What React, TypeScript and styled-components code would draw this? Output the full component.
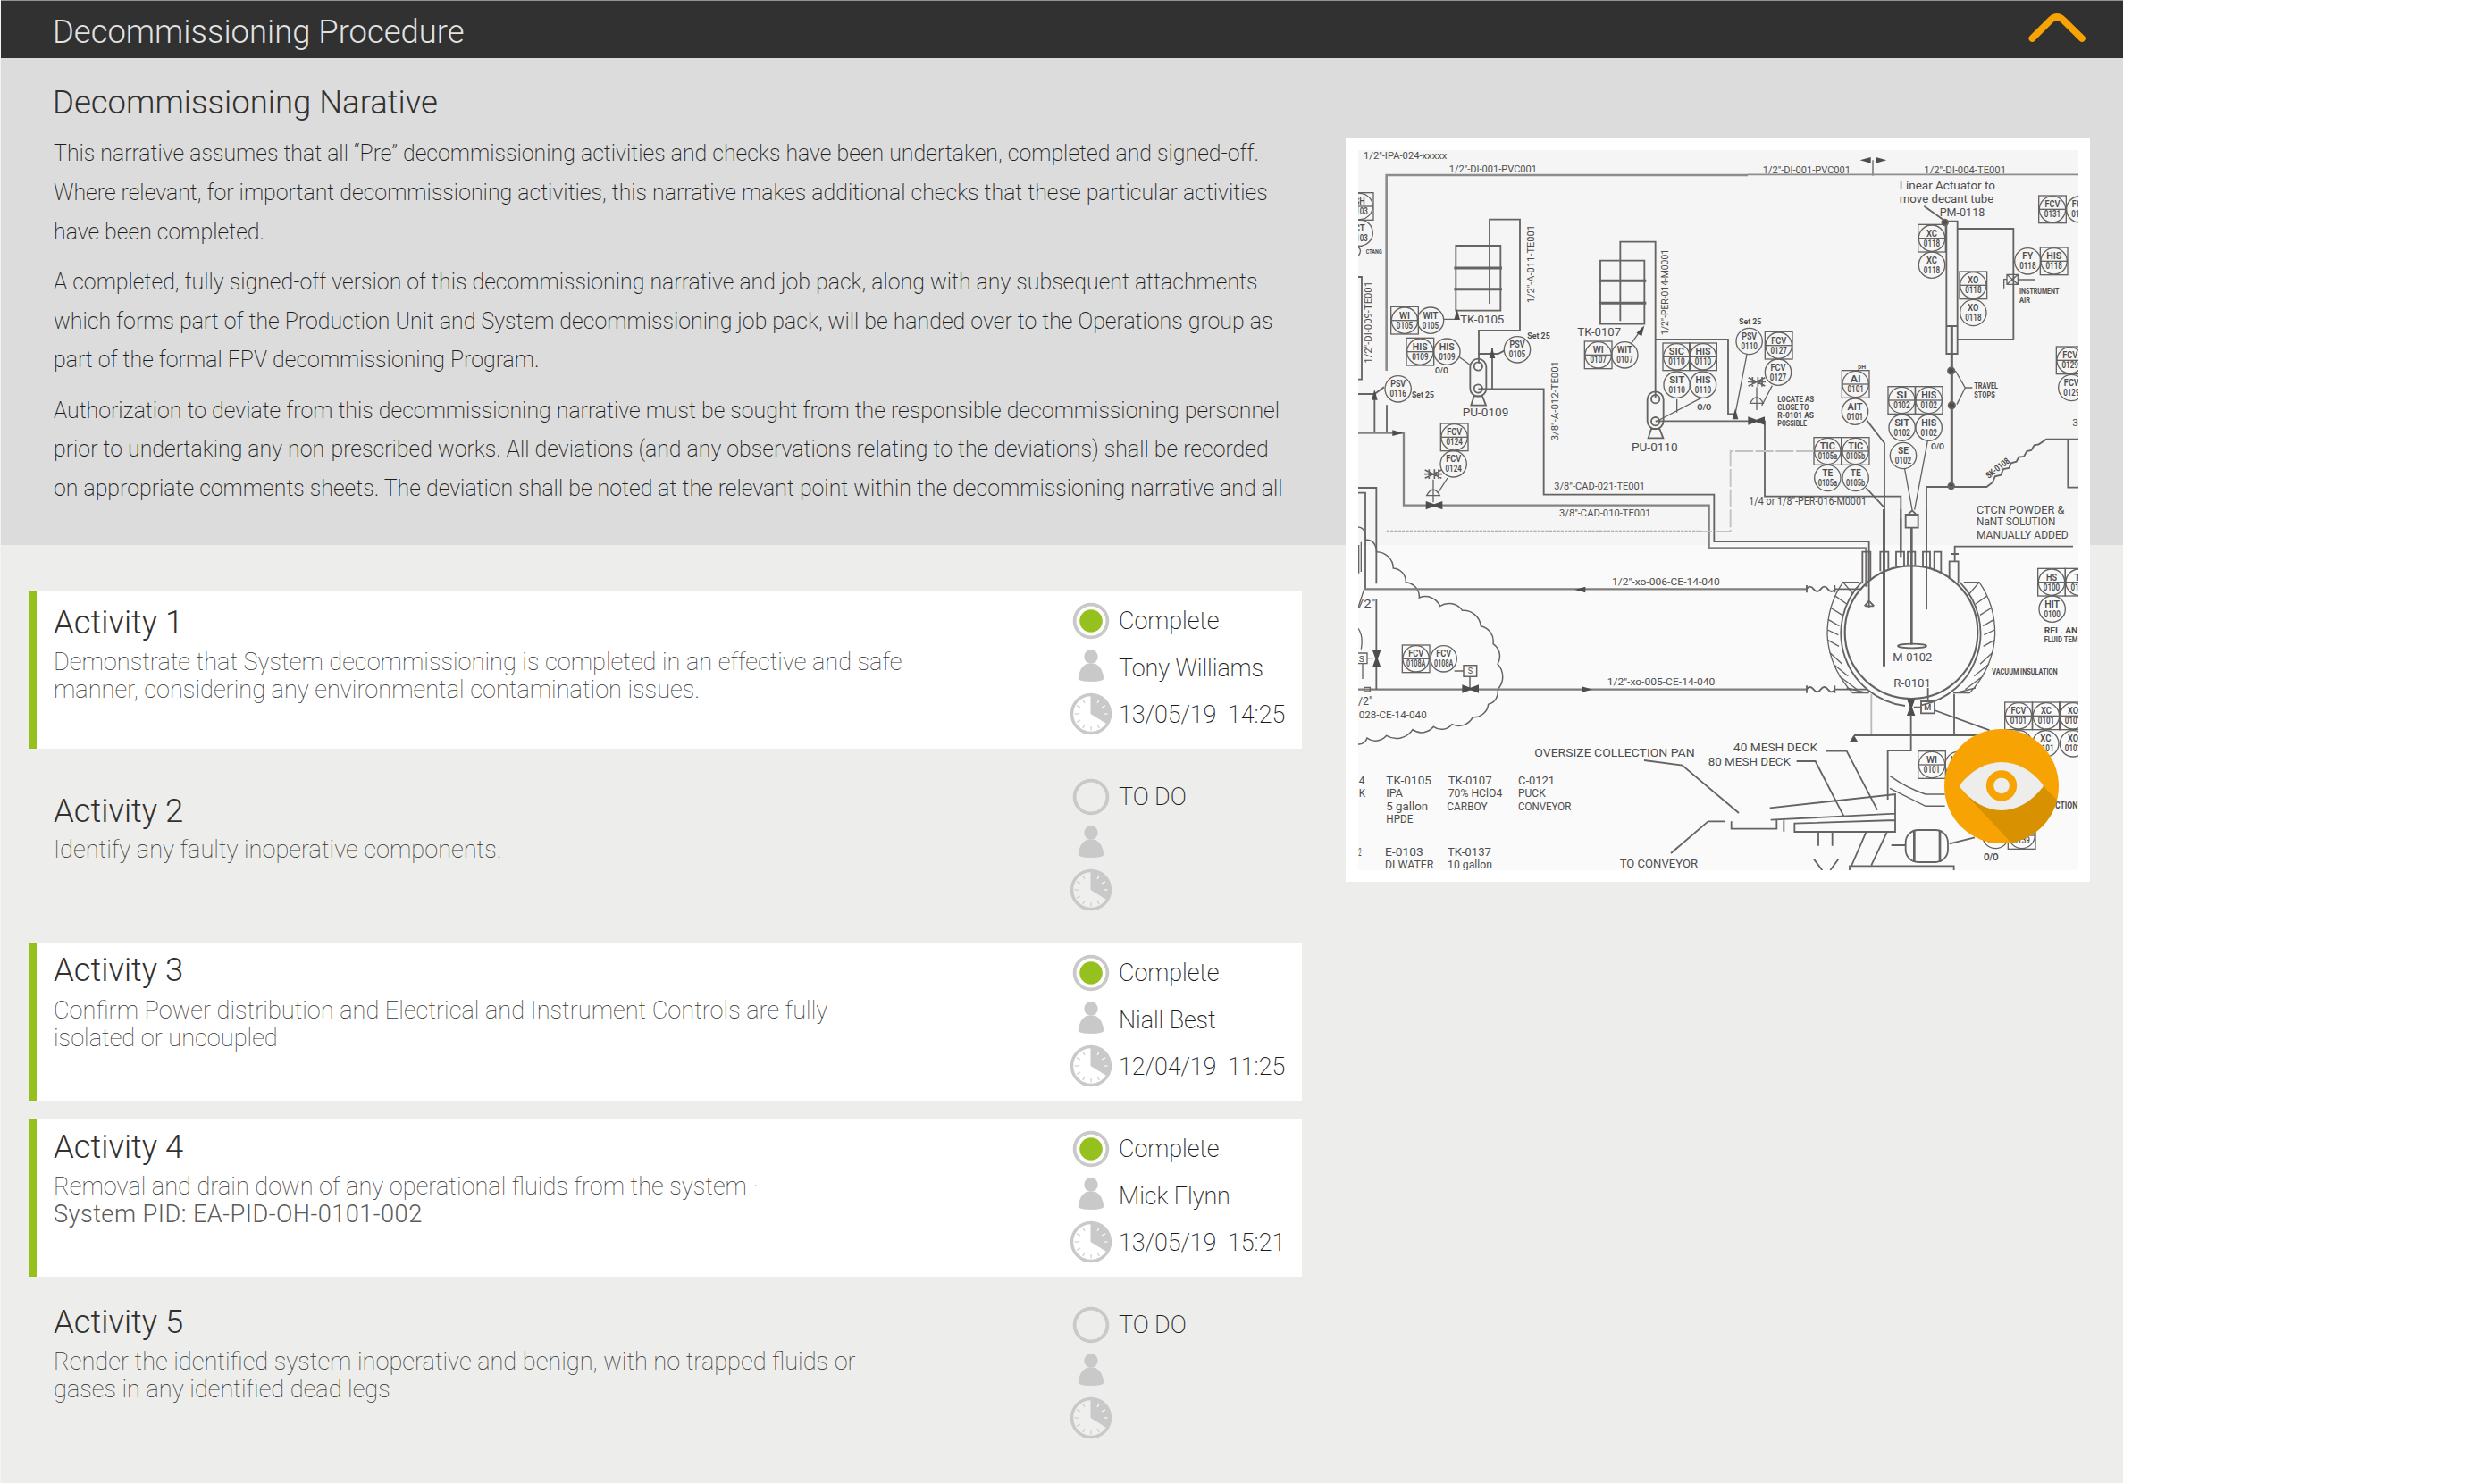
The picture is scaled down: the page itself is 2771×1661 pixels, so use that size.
import React from "react";
import styled, { createGlobalStyle } from "styled-components";

const Global = createGlobalStyle`
  * { box-sizing: border-box; }
  body { margin: 0; background: #fff; }
  #root { font-family: Roboto, "Liberation Sans", sans-serif; color: #313131; }
`;

const Panel = styled.main`
  width: 2376px;
  height: 1660px;
  border-left: 1px solid #f3f3f3;
  background: #ededeb;
  display: flex;
  flex-direction: column;
`;

const Header = styled.header`
  height: 65px;
  flex: none;
  display: flex;
  align-items: center;
  justify-content: space-between;
  padding: 5px 41px 0 58px;
  border-top: 1px solid #949494;
  background: #313131;
`;

const Title = styled.h1`
  margin: 0;
  font-size: 36.4px;
  font-weight: 300;
  line-height: 44px;
  white-space: nowrap;
  color: #e2e2e1;
`;

const Toggle = styled.button`
  border: 0;
  padding: 0;
  margin-top: -9px;
  background: none;
  display: flex;
`;

const Body = styled.div`
  flex: 1;
  display: grid;
  grid-template-columns: 1505px 833px 1fr;
  grid-template-rows: 545px 1fr;
`;

const Narrative = styled.section`
  grid-area: 1 / 1 / 2 / 4;
  background: #dcdcdc;
  padding: 28px 0 0 58px;
  overflow: hidden;
`;

const SubTitle = styled.h2`
  margin: 0 0 13px;
  font-size: 36.5px;
  font-weight: 300;
  line-height: 44px;
`;

const Paragraph = styled.p`
  margin: 0 0 12.5px;
  padding-left: 1px;
  font-size: 24.9px;
  font-weight: 200;
  line-height: 43.75px;
  white-space: nowrap;
  color: #1d1d1d;
`;

const Activities = styled.section`
  grid-area: 2 / 1 / 3 / 2;
  padding: 52px 0 0 31px;
  display: flex;
  flex-direction: column;
  gap: 21px;
`;

const Card = styled.article<{ $done: boolean }>`
  width: 1425px;
  height: 176px;
  flex: none;
  display: grid;
  grid-template-columns: 1138px 1fr;
  padding-left: 19px;
  border-left: 9px solid ${(p) => (p.$done ? "#95c11f" : "transparent")};
  background: ${(p) => (p.$done ? "#fff" : "transparent")};
`;

const Summary = styled.div<{ $top: number }>`
  padding-top: ${(p) => p.$top - 33.5}px;
`;

const CardTitle = styled.h3<{ $gap: number }>`
  margin: 0 0 ${(p) => p.$gap}px;
  font-size: 36.4px;
  font-weight: 300;
  line-height: 44px;
`;

const Description = styled.p`
  margin: 0;
  font-size: 27.2px;
  font-weight: 100;
  line-height: 31px;
  white-space: nowrap;
`;

const Reference = styled.span`
  font-weight: 300;
  letter-spacing: 0.45px;
  color: #5c5a5a;
`;

const Facts = styled.ul`
  list-style: none;
  margin: 0;
  padding: 7px 0 0;
`;

const Fact = styled.li<{ $h: number }>`
  height: ${(p) => p.$h}px;
  display: grid;
  grid-template-columns: 46px 1fr;
  column-gap: 8px;
  align-items: center;
  justify-items: center;
`;

const FactText = styled.span<{ $shift: number }>`
  justify-self: start;
  margin-top: ${(p) => p.$shift}px;
  font-size: 27px;
  font-weight: 200;
  letter-spacing: -0.1px;
  line-height: 32px;
  white-space: pre;
  color: #1d1d1d;
`;

const Figure = styled.figure`
  grid-area: 1 / 2 / 3 / 3;
  position: relative;
  width: 833px;
  height: 833px;
  margin: 89px 0 0;
  padding: 14px 13px 13px 14px;
  background: #fff;
`;

const Drawing = styled.svg`
  display: block;
  width: 806px;
  height: 806px;
  background: linear-gradient(#f5f5f5 442px, #fafafa 442px);
  font-family: Roboto, "Liberation Sans", sans-serif;
  fill: none;
  stroke: #666463;
  stroke-width: 5.5;
`;

const Reveal = styled.button`
  position: absolute;
  left: 670px;
  top: 662px;
  border: 0;
  padding: 0;
  background: none;
  display: flex;
`;

/* ---------- small icons ---------- */

const GREY = "#cac9ca";

const StatusIcon = ({ done }: { done: boolean }) => (
  <svg width="42" height="42" viewBox="-21 -21 42 42">
    <circle r="18.4" fill={done ? "#fff" : "none"} stroke={GREY} strokeWidth="3.8" />
    {done && <circle r="12.8" fill="#95c11f" />}
  </svg>
);

const PersonIcon = () => (
  <svg width="30" height="38" viewBox="0 0 30 38" fill={GREY}>
    <circle cx="15" cy="9" r="7.7" />
    <path d="M9.5 17.2 Q15 16 20.5 17.2 Q28.500 21.500 29.200 33.500 Q29 36.800 15 37 Q1 36.800 .8 33.500 Q1.500 21.500 9.500 17.200Z" />
  </svg>
);

const ClockIcon = ({ done }: { done: boolean }) => (
  <svg width="48" height="48" viewBox="-24 -24 48 48">
    <circle r="21.500" fill={done ? "#fff" : "#efefee"} stroke={GREY} strokeWidth="3.400" />
    <path d="M-.5 0 V-22 A22 22 0 0 1 18.500 11.800Z" fill={GREY} />
    {Array.from({ length: 11 }, (_, i) => i + 1).map((h) => (
      <path
        key={h}
        d="M0 -18.500 V-14"
        transform={`rotate(${h * 30})`}
        stroke={h < 4 ? "#fff" : GREY}
        strokeWidth="1.100"
      />
    ))}
  </svg>
);

const EyeIcon = () => (
  <svg width="128" height="128" viewBox="-192 -192 384 384">
    <defs>
      <clipPath id="disc">
        <circle r="192" />
      </clipPath>
    </defs>
    <circle r="192" fill="#f7a304" />
    <path clipPath="url(#disc)" d="M140 0 L240 100 V240 H80 L-110 38Z" fill="#d89100" />
    <path d="M-139 4 Q-142 -2 -138 -7 Q-78 -80 0 -81 Q78 -80 138 -7 Q142 -2 138 4 Q78 80 0 81 Q-78 80 -139 4Z" fill="#ededeb" />
    <circle r="39" cy="-2" fill="none" stroke="#f7a304" strokeWidth="25" />
  </svg>
);

/* ---------- piping diagram ---------- */

const INK = "#4f4d4c";

type LabelProps = { x: number; y: number; w: number; s?: number; b?: number; r?: number; t: string };
const Label = ({ x, y, w, s = 36, b = 400, r = 0, t }: LabelProps) => (
  <text
    transform={`translate(${x} ${y}) rotate(${r})`}
    fontSize={s}
    fontWeight={b}
    textLength={w}
    lengthAdjust="spacingAndGlyphs"
    fill={INK}
    stroke="none"
  >
    {t}
  </text>
);

type TagProps = { x: number; y: number; a: string; n: string; box?: boolean };
const Tag = ({ x, y, a, n, box }: TagProps) => (
  <g transform={`translate(${x} ${y})`} strokeWidth="4">
    {box && <rect x="-46" y="-46" width="92" height="92" />}
    {box && <path d="M-45 0H45" />}
    <circle r="44" />
    <g fill={INK} stroke="none" fontSize="31" fontWeight="600" textAnchor="middle">
      <text y="-6" textLength={a.length * 15 + 6} lengthAdjust="spacingAndGlyphs">{a}</text>
      <text y="27" textLength={n.length > 4 ? 64 : 55} lengthAdjust="spacingAndGlyphs">{n}</text>
    </g>
  </g>
);

const Valve = ({ x, y, r = 0 }: { x: number; y: number; r?: number }) => (
  <path transform={`translate(${x} ${y}) rotate(${r})`} d="M-28 -14 L0 -4 L28 -14 V14 L0 4 L-28 14Z" fill={INK} stroke="none" />
);

const Arrow = ({ x, y, r = 0 }: { x: number; y: number; r?: number }) => (
  <path transform={`translate(${x} ${y}) rotate(${r})`} d="M-18 -10 L18 0 L-18 10Z" fill={INK} stroke="none" />
);

const Actuated = ({ x, y }: { x: number; y: number }) => (
  <g transform={`translate(${x} ${y})`} strokeWidth="4">
    <path d="M-28 -14L28 14M-28 14L28 -14M-14 -16V16M4 -16V16M18 -16V16M-30 0H30" strokeWidth="5" />
    <path d="M0 18V95M-22 72Q0 32 22 72Z" />
  </g>
);

const Pump = ({ x, y }: { x: number; y: number }) => (
  <g transform={`translate(${x} ${y})`}>
    <rect x="-27" y="-25" width="54" height="126" rx="27" />
    <circle r="14" />
    <circle cy="75" r="14" />
    <path d="M-14 100L-24 131H26L14 100Z" />
  </g>
);

const cloud: [number, number][] = [
  [122, 143], [178, 198], [220, 245], [265, 297], [335, 325], [410, 340], [472, 392], [513, 452],
  [528, 520], [528, 605], [497, 655], [445, 698], [375, 722], [313, 730], [243, 740], [155, 760], [90, 768], [56, 788],
];
const cloudPath =
  "M60 60 Q85 60 85 103 Q118 100 122 143" +
  cloud
    .slice(1)
    .map(([x, y], i) => {
      const d = Math.hypot(x - cloud[i][0], y - cloud[i][1]) * 0.72;
      return ` A${d} ${d} 0 0 1 ${x} ${y}`;
    })
    .join("");

const NorthWest = () => (
  <g>
    <Label x={78} y={83} w={280} s={30} t={'1/2"-IPA-024-xxxxx'} />
    <Label x={365} y={130} w={295} s={34} t={'1/2"-DI-001-PVC001'} />
    <path d="M155 795V138H1368" stroke="#8f8d8c" strokeWidth="8" />
    <path d="M388 375H538V593H388Z" />
    <path d="M382 450H543M382 521H543" strokeWidth="9" />
    <path d="M501 570V287H603V660H465V770" />
    <path d="M873 425H1021V638H873Z" />
    <path d="M868 493H1027M868 568H1027" strokeWidth="9" />
    <path d="M940 628V362H1058V885M1058 690H1302V940H1330" />
    <Label x={402} y={636} w={148} t="TK-0105" />
    <Label x={796} y={678} w={146} t="TK-0107" />
    <Label x={652} y={568} w={262} s={34} r={-90} t={'1/2"-A-011-TE001'} />
    <Label x={1100} y={675} w={288} s={34} r={-90} t={'1/2"-PER-014-M0001'} />
    <Label x={106} y={770} w={275} s={34} r={-90} t={'1/2"-DI-009-TE001'} />
    <Label x={733} y={1030} w={268} s={34} r={-90} t={'3/8"-A-012-TE001'} />
    <Tag x={65} y={243} a="SH" n="0103" box />
    <Tag x={65} y={332} a="CT" n="0103" />
    <path d="M60 380Q75 390 60 410" strokeWidth="4" />
    <Label x={86} y={402} w={54} s={24} b={700} t="CTANG" />
    <Tag x={216} y={626} a="WI" n="0105" box />
    <Tag x={303} y={626} a="WIT" n="0105" />
    <Tag x={268} y={731} a="HIS" n="0109" box />
    <Tag x={358} y={731} a="HIS" n="0109" />
    <Tag x={594} y={724} a="PSV" n="0105" />
    <Tag x={194} y={856} a="PSV" n="0116" />
    <Tag x={383} y={1018} a="FCV" n="0124" box />
    <Tag x={380} y={1108} a="FCV" n="0124" />
    <Tag x={866} y={742} a="WI" n="0107" box />
    <Tag x={955} y={742} a="WIT" n="0107" />
    <Tag x={1129} y={748} a="SIC" n="0110" box />
    <Tag x={1218} y={748} a="HIS" n="0110" box />
    <Tag x={1130} y={842} a="SIT" n="0110" />
    <Tag x={1218} y={842} a="HIS" n="0110" />
    <Label x={628} y={688} w={76} s={27} b={700} t="Set 25" />
    <Label x={240} y={885} w={75} s={27} b={700} t="Set 25" />
    <Label x={318} y={804} w={44} s={28} b={700} t="O/O" />
    <Label x={1198} y={928} w={48} s={28} b={700} t="O/O" />
    <Pump x={463} y={780} />
    <Label x={410} y={948} w={155} t="PU-0109" />
    <Pump x={1058} y={890} />
    <Label x={978} y={1066} w={155} t="PU-0110" />
    <path d="M463 738H530L550 728M510 720V855M463 856H683V1211H1255V1368H1775V1590" />
    <path d="M1058 964H1425V1217H1882V1420" />
    <path d="M398 748L435 775M348 622H392V600M975 706L1015 650M1130 890V935M1060 966L1212 886" strokeWidth="4" />
    <Arrow x={510} y={735} r={-90} />
    <Arrow x={392} y={606} r={-90} />
    <Arrow x={1012} y={658} r={-60} />
    <path d="M60 873H115L147 850M115 870V1003M156 910V1003M60 480H72V824H60M60 1188H121V1510M60 1205H84V1528" />
    <path d="M60 1004H213V1247H1238V1390H1765V1520" strokeWidth="7" stroke="#858382" />
    <Arrow x={193} y={1004} />
    <Arrow x={115} y={875} r={-90} />
    <Actuated x={312} y={1142} />
    <path d="M360 1155L328 1205" strokeWidth="4" />
    <Valve x={315} y={1247} />
    <Label x={718} y={1194} w={305} s={34} t={'3/8"-CAD-021-TE001'} />
  </g>
);

const NorthEast = () => (
  <g transform="translate(1260 0)">
    <Label x={158} y={131} w={295} s={34} t={'1/2"-DI-001-PVC001'} />
    <Label x={700} y={131} w={275} s={34} t={'1/2"-DI-004-TE001'} />
    <path d="M108 136H1220M528 88V140" stroke="#8f8d8c" />
    <Arrow x={503} y={88} r={180} />
    <Arrow x={556} y={88} />
    <Label x={617} y={187} w={322} s={38} t="Linear Actuator to" />
    <Label x={617} y={231} w={317} s={38} t="move decant tube" />
    <Label x={752} y={276} w={152} t="PM-0118" />
    <path d="M700 242L770 292M775 293H812V738H775ZM775 645H812M812 318H1000V690H812" />
    <path d="M793 645V1182" strokeWidth="9" />
    <g fill={INK}>
      <circle cx="770" cy="297" r="10" />
      <circle cx="791" cy="795" r="11" />
      <circle cx="793" cy="911" r="11" />
      <circle cx="791" cy="1182" r="10" />
    </g>
    <path d="M978 472H1015V505H978ZM978 472L1015 505M978 505L1015 472M1015 489H1072M978 488H968V518" strokeWidth="4" />
    <Label x={1020} y={538} w={133} s={28} b={700} t="INSTRUMENT" />
    <Label x={1020} y={566} w={36} s={26} b={700} t="AIR" />
    <Tag x={726} y={350} a="XC" n="0118" box />
    <Tag x={726} y={440} a="XC" n="0118" />
    <Tag x={865} y={508} a="XO" n="0118" box />
    <Tag x={865} y={600} a="XO" n="0118" />
    <Tag x={1048} y={427} a="FY" n="0118" />
    <Tag x={1136} y={427} a="HIS" n="0118" box />
    <Tag x={1131} y={253} a="FCV" n="0131" box />
    <Tag x={1222} y={253} a="FCV" n="0131" />
    <Tag x={113} y={696} a="PSV" n="0110" />
    <Tag x={212} y={710} a="FCV" n="0127" box />
    <Tag x={210} y={800} a="FCV" n="0127" />
    <Tag x={470} y={840} a="AI" n="0101" box />
    <Tag x={468} y={932} a="AIT" n="0101" />
    <Tag x={625} y={894} a="SI" n="0102" box />
    <Tag x={716} y={894} a="HIS" n="0102" box />
    <Tag x={626} y={986} a="SIT" n="0102" />
    <Tag x={716} y={986} a="HIS" n="0102" />
    <Tag x={630} y={1080} a="SE" n="0102" />
    <Tag x={376} y={1065} a="TIC" n="0105a" box />
    <Tag x={470} y={1065} a="TIC" n="0105b" box />
    <Tag x={376} y={1155} a="TE" n="0105a" />
    <Tag x={470} y={1155} a="TE" n="0105b" />
    <Tag x={1190} y={760} a="FCV" n="0129" box />
    <Tag x={1195} y={852} a="FCV" n="0129" />
    <Label x={1198} y={980} w={20} s={35} t="3" />
    <Label x={78} y={640} w={76} s={27} b={700} t="Set 25" />
    <Label x={208} y={899} w={122} s={28} b={700} t="LOCATE AS" />
    <Label x={208} y={926} w={105} s={28} b={700} t="CLOSE TO" />
    <Label x={208} y={953} w={122} s={28} b={700} t="R-0101 AS" />
    <Label x={208} y={980} w={98} s={28} b={700} t="POSSIBLE" />
    <Label x={112} y={1246} w={395} s={36} t={'1/4 or 1/8"-PER-016-M0001'} />
    <Label x={868} y={856} w={80} s={28} b={700} t="TRAVEL" />
    <Label x={868} y={884} w={70} s={28} b={700} t="STOPS" />
    <Label x={723} y={1060} w={45} s={28} b={700} t="O/O" />
    <Label x={478} y={790} w={26} s={22} b={700} t="pH" />
    <path d="M805 795L838 852H862M810 908L838 852M105 740L67 935M190 845L155 912M635 1125L660 1262M712 1030L668 1262" strokeWidth="4" />
    <path d="M508 962L567 1038V1787M505 1188L567 1255M622 1290V1400" />
    <Actuated x={138} y={832} />
    <Valve x={137} y={963} />
    <Arrow x={66} y={940} r={-90} />
    <path d="M708 1595V1185H910L930 1170L938 1150L958 1145L966 1125L985 1122L992 1105L1010 1100L1018 1085L1035 1083L1045 1065L1060 1062L1070 1045L1085 1042L1110 1025H1220M1183 1025V1187H1220" />
    <Label x={917} y={1158} w={92} s={30} b={700} r={-38} t="SK-0108" />
    <path d="M330 1065H50V1335H-50" stroke="#c4c2c1" strokeDasharray="60 8" />
  </g>
);

const SouthWest = () => (
  <g transform="translate(0 1260)">
    <Label x={735} y={24} w={308} s={34} t={'3/8"-CAD-010-TE001'} />
    <path d="M155 74H1212" stroke="#b1afae" strokeDasharray="10 3" />
    <path d={cloudPath} strokeWidth="4.5" />
    <path d="M62 120V215M70 110V210M60 400Q78 425 70 470M60 330L80 268" strokeWidth="4" />
    <path d="M80 268H1565M60 605H1565" strokeWidth="7" stroke="#807e7d" />
    <path d="M1565 268q12 -16 24 0t24 0t24 0t24 0H1750M1565 605q12 -16 24 0t24 0t24 0t24 0H1770" />
    <path d="M1566 255V280M1660 255V280M1566 592V617M1660 592V617" />
    <Arrow x={805} y={270} r={180} />
    <Arrow x={828} y={605} />
    <Label x={912} y={254} w={362} s={34} t={'1/2"-xo-006-CE-14-040'} />
    <Label x={896} y={590} w={362} s={34} t={'1/2"-xo-005-CE-14-040'} />
    <path d="M121 300V605" />
    <Valve x={122} y={502} r={90} />
    <path d="M60 483H90V518H60M90 500H112M75 520V570M80 598H100V612H80Z" strokeWidth="4" />
    <Label x={62} y={512} w={18} s={28} t="S" />
    <Label x={60} y={330} w={58} s={36} t={'/2"'} />
    <Label x={60} y={658} w={48} s={36} t={'/2"'} />
    <Label x={62} y={702} w={228} s={34} t="028-CE-14-040" />
    <Tag x={254} y={502} a="FCV" n="0108A" box />
    <Tag x={347} y={502} a="FCV" n="0108A" />
    <path d="M383 543H414M414 524H458V562H414ZM435 562V600" strokeWidth="4.5" />
    <Label x={428} y={553} w={16} s={28} t="S" />
    <Valve x={437} y={603} />
    <Label x={652} y={830} w={538} s={40} t="OVERSIZE COLLECTION PAN" />
    <path d="M1020 843L1148 860L1338 1020M1110 1155L1235 1048H1292" />
    <Label x={62} y={923} w={20} s={40} t="4" />
    <Label x={62} y={967} w={22} s={40} t="K" />
    <Label x={61} y={1163} w={10} s={40} t="2" />
    <Label x={154} y={923} w={152} s={40} t="TK-0105" />
    <Label x={154} y={967} w={56} s={40} t="IPA" />
    <Label x={154} y={1010} w={140} s={40} t="5 gallon" />
    <Label x={154} y={1054} w={90} s={40} t="HPDE" />
    <Label x={362} y={923} w={147} s={40} t="TK-0107" />
    <Label x={362} y={967} w={182} s={40} t="70% HClO4" />
    <Label x={358} y={1010} w={136} s={40} t="CARBOY" />
    <Label x={597} y={923} w={123} s={40} t="C-0121" />
    <Label x={597} y={967} w={92} s={40} t="PUCK" />
    <Label x={597} y={1010} w={178} s={40} t="CONVEYOR" />
    <Label x={150} y={1163} w={128} s={40} t="E-0103" />
    <Label x={150} y={1206} w={163} s={40} t="DI WATER" />
    <Label x={360} y={1163} w={147} s={40} t="TK-0137" />
    <Label x={360} y={1206} w={150} s={40} t="10 gallon" />
    <Label x={938} y={1203} w={262} s={40} t="TO CONVEYOR" />
    <Label x={1235} y={861} w={277} s={40} t="80 MESH DECK" />
  </g>
);

const jacket =
  "M480 245H428Q375 320 375 420Q380 530 460 617H515M428 245L462 285M400 290L440 318M385 330L425 355M378 370L415 392M376 405L412 422M378 440L414 460M382 480L425 520M395 520L445 560M415 560L475 605M440 600L500 615";

const SouthEast = () => (
  <g transform="translate(1260 1260)">
    <Label x={876} y={16} w={295} s={40} t="CTCN POWDER &amp;" />
    <Label x={876} y={54} w={265} s={40} t="NaNT SOLUTION" />
    <Label x={876} y={98} w={308} s={40} t="MANUALLY ADDED" />
    <circle cx="657" cy="413" r="223" strokeWidth="6.500" />
    <path d="M490 245A246 246 0 0 0 636 660M820 245A246 246 0 0 1 690 658" />
    <path d={jacket} strokeWidth="4" />
    <path d={jacket} strokeWidth="4" transform="translate(1313 0) scale(-1 1)" />
    <path d="M493 250V143H520V240M553 208V143H580V200M606 192V143H633V190M645 188V143H670V188M696 195V143H720V200M734 208V143H757V216M785 235V175H815V250M803 175V125H1200M508 145V260" />
    <path d="M565 0V527M658 62V455" strokeWidth="8" />
    <path d="M622 0V160M708 0V337M638 18H680V62H638ZM648 16L660 4L672 16" />
    <ellipse cx="660" cy="459" rx="48" ry="7" />
    <path d="M790 150H816M500 325L515 308L532 325M503 325H530" />
    <Label x={595} y={509} w={132} t="M-0102" />
    <Label x={598} y={597} w={125} t="R-0101" />
    <Valve x={656} y={665} r={90} />
    <path d="M656 690V810H578V975M690 645H735V685H690ZM665 665H690M713 600V645M735 675L920 742M801 620V755M465 759H900" />
    <path d="M523 620V755" stroke="#bbb9b8" />
    <Label x={700} y={675} w={24} s={26} b={500} t="M" />
    <path d="M464 760L452 780H476Z" fill={INK} strokeWidth="3" />
    <path d="M585 895Q640 935 705 957H770M585 937L705 997H770" strokeWidth="4.500" />
    <Label x={60} y={813} w={282} s={40} t="40 MESH DECK" />
    <path d="M372 812H440L543 1010M272 846H335L430 1030M182 1003L603 957V1083H265V1055L603 1044M185 1043L603 1022M53 1048V1073H205V1045M229 1045V1082M345 1083V1130M392 1130V1083M330 1175L358 1212M412 1175L385 1212M505 1085L455 1200M575 1085L523 1195M450 1214V1198H800V1214" />
    <rect x="638" y="1077" width="142" height="108" rx="42" />
    <path d="M667 1077V1185M753 1077V1185" strokeWidth="8" />
    <path d="M590 1128H638M785 1123L870 1102" />
    <Tag x={726} y={858} a="WI" n="0101" box />
    <Tag x={815} y={858} a="WIT" n="0101" />
    <Tag x={1017} y={694} a="FCV" n="0101" box />
    <Tag x={1110} y={694} a="XC" n="0101" box />
    <Tag x={1200} y={694} a="XO" n="0101" box />
    <Tag x={1018} y={787} a="FCV" n="0101" />
    <Tag x={1108} y={787} a="XC" n="0101" />
    <Tag x={1200} y={787} a="XO" n="0101" />
    <Tag x={940} y={1095} a="SI" n="0139" />
    <Tag x={1028} y={1095} a="SI" n="0139" box />
    <Label x={900} y={1180} w={50} s={30} b={700} t="O/O" />
    <Label x={1140} y={1005} w={76} s={32} b={700} t="CTION" />
    <Label x={928} y={556} w={220} s={27} b={700} t="VACUUM INSULATION" />
    <Tag x={1128} y={245} a="HS" n="0100" box />
    <Tag x={1220} y={245} a="TI" n="0100" box />
    <Tag x={1130} y={335} a="HIT" n="0100" />
    <Label x={1103} y={418} w={113} s={27} b={700} t="REL.  AN" />
    <Label x={1103} y={448} w={113} s={27} b={700} t="FLUID TEM" />
  </g>
);

/* ---------- content ---------- */

type Activity = {
  title: string;
  lines: string[];
  reference?: string;
  status: "Complete" | "TO DO";
  person?: string;
  time?: string;
  top: number;
  gap: number;
};

const activities: Activity[] = [
  {
    title: "Activity 1",
    lines: ["Demonstrate that System decommissioning is completed in an effective and safe", "manner, considering any environmental contamination issues."],
    status: "Complete", person: "Tony Williams", time: "13/05/19  14:25", top: 46, gap: 7,
  },
  { title: "Activity 2", lines: ["Identify any faulty inoperative components."], status: "TO DO", top: 60.5, gap: 5.5 },
  {
    title: "Activity 3",
    lines: ["Confirm Power distribution and Electrical and Instrument Controls are fully", "isolated or uncoupled"],
    status: "Complete", person: "Niall Best", time: "12/04/19  11:25", top: 41.5, gap: 7.5,
  },
  {
    title: "Activity 4",
    lines: ["Removal and drain down of any operational fluids from the system ·"],
    reference: "System PID: EA-PID-OH-0101-002",
    status: "Complete", person: "Mick Flynn", time: "13/05/19  15:21", top: 42, gap: 7,
  },
  {
    title: "Activity 5",
    lines: ["Render the identified system inoperative and benign, with no trapped fluids or", "gases in any identified dead legs"],
    status: "TO DO", top: 41, gap: 7,
  },
];

const paragraphs = [
  [
    "This narrative assumes that all “Pre” decommissioning activities and checks have been undertaken, completed and signed-off.",
    "Where relevant, for important decommissioning activities, this narrative makes additional checks that these particular activities",
    "have been completed.",
  ],
  [
    "A completed, fully signed-off version of this decommissioning narrative and job pack, along with any subsequent attachments",
    "which forms part of the Production Unit and System decommissioning job pack, will be handed over to the Operations group as",
    "part of the formal FPV decommissioning Program.",
  ],
  [
    "Authorization to deviate from this decommissioning narrative must be sought from the responsible decommissioning personnel",
    "prior to undertaking any non-prescribed works. All deviations (and any observations relating to the deviations) shall be recorded",
    "on appropriate comments sheets. The deviation shall be noted at the relevant point within the decommissioning narrative and all",
  ],
];

const Lines = ({ lines }: { lines: string[] }) => (
  <>
    {lines.map((line, i) => (
      <React.Fragment key={line}>
        {i > 0 && <br />}
        {line}
      </React.Fragment>
    ))}
  </>
);

const ActivityCard = ({ a }: { a: Activity }) => {
  const done = a.status === "Complete";
  return (
    <Card $done={done}>
      <Summary $top={a.top}>
        <CardTitle $gap={a.gap}>{a.title}</CardTitle>
        <Description>
          <Lines lines={a.lines} />
          {a.reference && (
            <>
              <br />
              <Reference>{a.reference}</Reference>
            </>
          )}
        </Description>
      </Summary>
      <Facts>
        <Fact $h={52}>
          <StatusIcon done={done} />
          <FactText $shift={0}>{a.status}</FactText>
        </Fact>
        <Fact $h={48}>
          <PersonIcon />
          <FactText $shift={5}>{a.person}</FactText>
        </Fact>
        <Fact $h={60}>
          <ClockIcon done={done} />
          <FactText $shift={1}>{a.time}</FactText>
        </Fact>
      </Facts>
    </Card>
  );
};

export default function App() {
  return (
    <>
      <Global />
      <Panel>
        <Header>
          <Title>Decommissioning Procedure</Title>
          <Toggle aria-label="Collapse">
            <svg width="66" height="36" viewBox="415 40 198 108">
              <path d="M431 130L494 67Q514 49 534 67L598 130" fill="none" stroke="#f7a304" strokeWidth="23" strokeLinecap="round" />
            </svg>
          </Toggle>
        </Header>
        <Body>
          <Narrative>
            <SubTitle>Decommissioning Narative</SubTitle>
            {paragraphs.map((p) => (
              <Paragraph key={p[0]}>
                <Lines lines={p} />
              </Paragraph>
            ))}
          </Narrative>
          <Activities>
            {activities.map((a) => (
              <ActivityCard key={a.title} a={a} />
            ))}
          </Activities>
          <Figure>
            <Drawing viewBox="60 54 2418 2418">
              <NorthWest />
              <NorthEast />
              <SouthWest />
              <SouthEast />
            </Drawing>
            <Reveal aria-label="View drawing">
              <EyeIcon />
            </Reveal>
          </Figure>
        </Body>
      </Panel>
    </>
  );
}
